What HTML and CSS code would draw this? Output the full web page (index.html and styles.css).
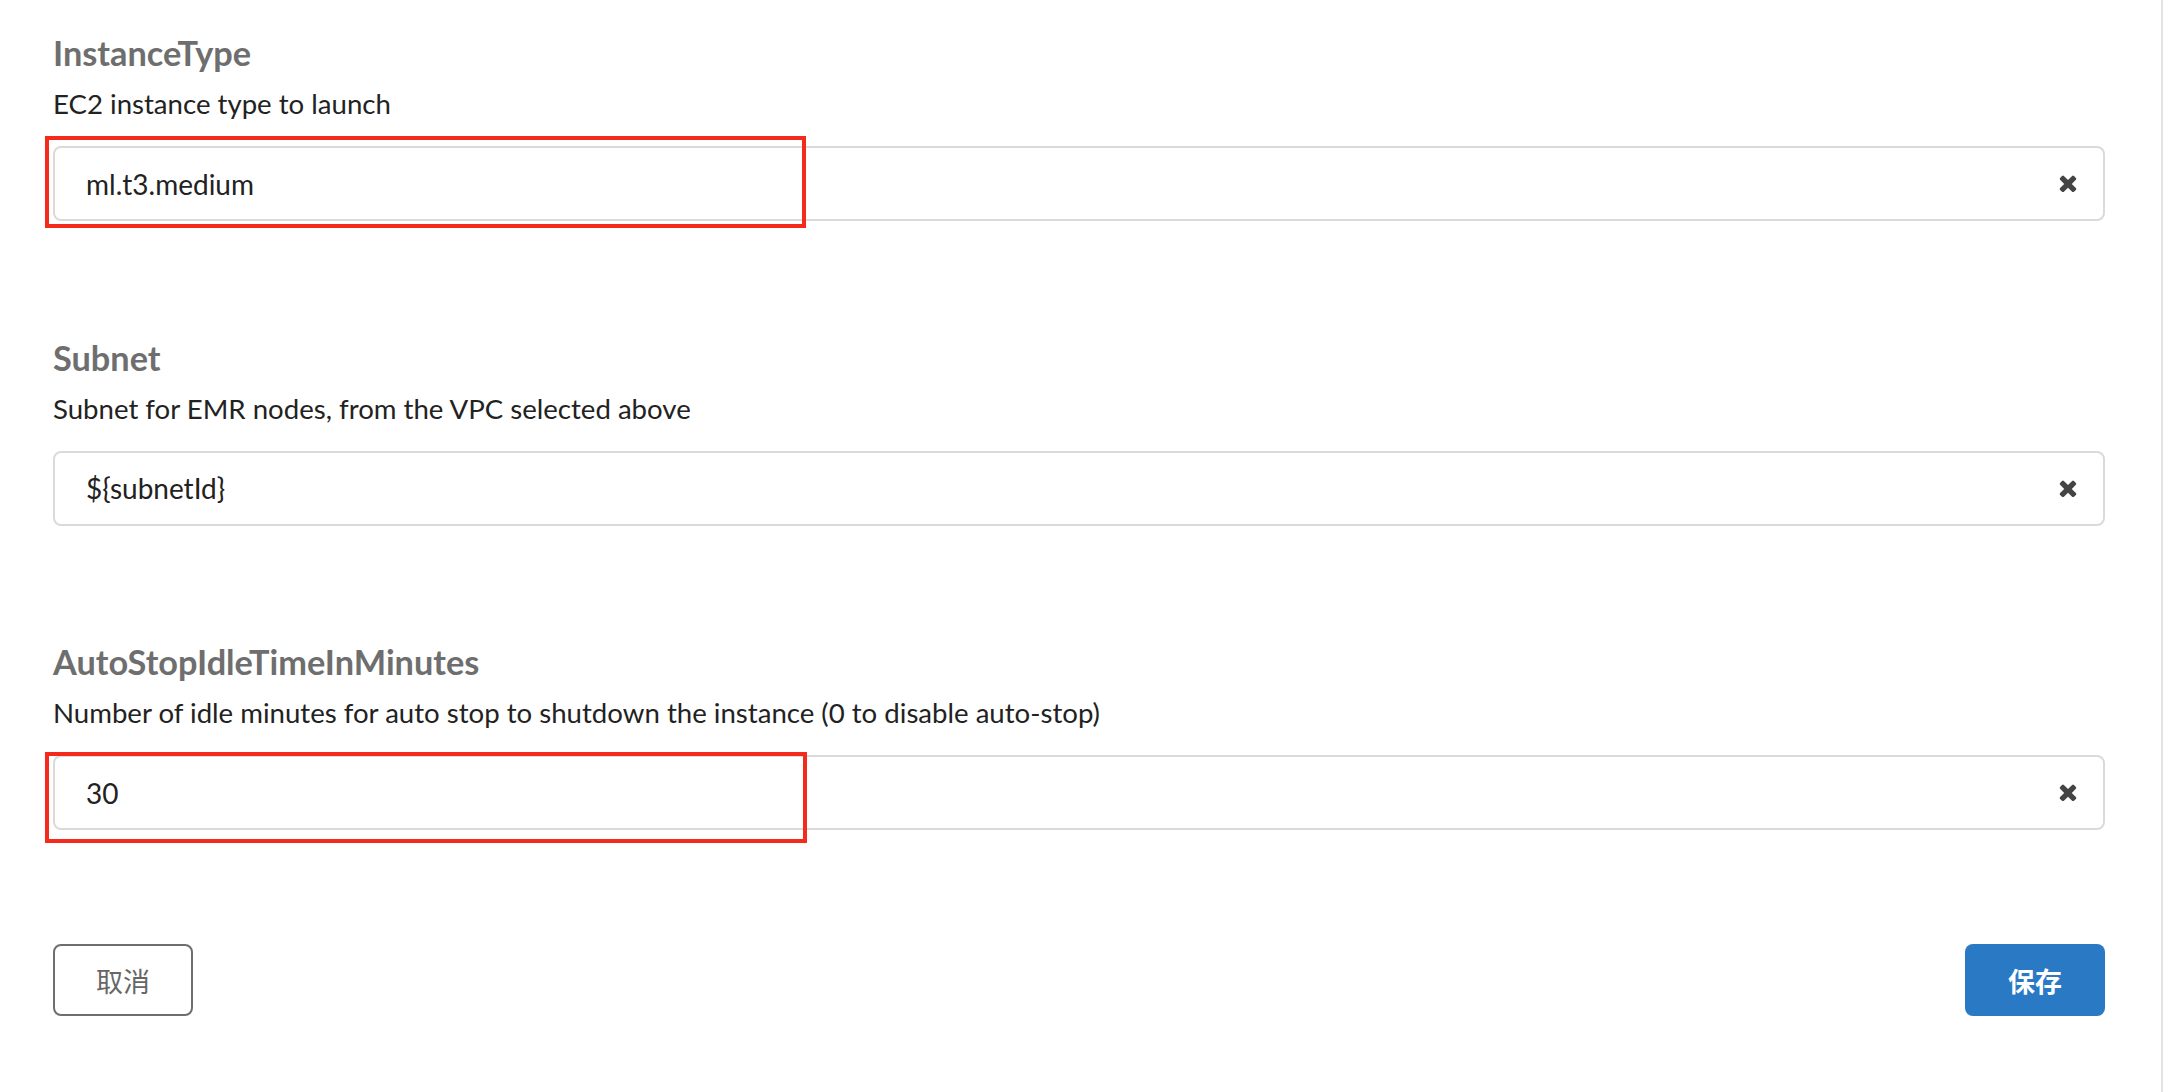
FILE: index.html
```html
<!DOCTYPE html>
<html lang="en">
<head>
<meta charset="utf-8">
<title>Parameters</title>
<link rel="stylesheet" href="styles.css">
</head>
<body>
<div class="panel">
  <form class="form">
    <section class="field">
      <h3 class="field-title">InstanceType</h3>
      <p class="field-desc">EC2 instance type to launch</p>
      <div class="input-wrap">
        <input class="input" type="text" value="ml.t3.medium">
        <button type="button" class="clear" aria-label="clear">
          <svg viewBox="100 250 1208 1290" width="18" height="18"><path fill="#444" d="M1298 1322q0 40-28 68l-136 136q-28 28-68 28t-68-28l-294-294-294 294q-28 28-68 28t-68-28l-136-136q-28-28-28-68t28-68l294-294-294-294q-28-28-28-68t28-68l136-136q28-28 68-28t68 28l294 294 294-294q28-28 68-28t68 28l136 136q28 28 28 68t-28 68l-294 294 294 294q28 28 28 68z"/></svg>
        </button>
        <span class="mark mark-1"></span>
      </div>
    </section>
    <section class="field">
      <h3 class="field-title">Subnet</h3>
      <p class="field-desc">Subnet for EMR nodes, from the VPC selected above</p>
      <div class="input-wrap">
        <input class="input" type="text" value="${subnetId}">
        <button type="button" class="clear" aria-label="clear">
          <svg viewBox="100 250 1208 1290" width="18" height="18"><path fill="#444" d="M1298 1322q0 40-28 68l-136 136q-28 28-68 28t-68-28l-294-294-294 294q-28 28-68 28t-68-28l-136-136q-28-28-28-68t28-68l294-294-294-294q-28-28-28-68t28-68l136-136q28-28 68-28t68 28l294 294 294-294q28-28 68-28t68 28l136 136q28 28 28 68t-28 68l-294 294 294 294q28 28 28 68z"/></svg>
        </button>
      </div>
    </section>
    <section class="field">
      <h3 class="field-title">AutoStopIdleTimeInMinutes</h3>
      <p class="field-desc">Number of idle minutes for auto stop to shutdown the instance (0 to disable auto-stop)</p>
      <div class="input-wrap">
        <input class="input" type="text" value="30">
        <button type="button" class="clear" aria-label="clear">
          <svg viewBox="100 250 1208 1290" width="18" height="18"><path fill="#444" d="M1298 1322q0 40-28 68l-136 136q-28 28-68 28t-68-28l-294-294-294 294q-28 28-68 28t-68-28l-136-136q-28-28-28-68t28-68l294-294-294-294q-28-28-28-68t28-68l136-136q28-28 68-28t68 28l294 294 294-294q28-28 68-28t68 28l136 136q28 28 28 68t-28 68l-294 294 294 294q28 28 28 68z"/></svg>
        </button>
        <span class="mark mark-3"></span>
      </div>
    </section>
    <div class="actions">
      <button type="button" class="btn btn-cancel">取消</button>
      <button type="button" class="btn btn-save">保存</button>
    </div>
  </form>
</div>
</body>
</html>
```
FILE: styles.css
```css
html, body {
  margin: 0;
  padding: 0;
  background: #fff;
}
body {
  font-family: Lato, "Noto Sans CJK SC", sans-serif;
  color: #222;
}
.panel {
  width: 2163px;
  min-height: 1092px;
  border-right: 2px solid #e3e3e3;
  box-sizing: border-box;
}
.form {
  padding: 35px 56px 0 53px;
}
.field {
  margin: 0 0 118.5px 0;
}
.field-title {
  margin: 0;
  font-size: 34.3px;
  line-height: 36px;
  font-weight: 700;
  color: #6e6e6e;
}
.field-desc {
  margin: 15px 0 0 0;
  font-size: 27.6px;
  line-height: 36px;
  color: #222;
}
.input-wrap {
  position: relative;
  margin-top: 24px;
}
.input {
  display: block;
  width: 100%;
  height: 75px;
  box-sizing: border-box;
  border: 2px solid #dadada;
  border-radius: 8px;
  padding: 0 80px 0 31px;
  font-family: Lato, sans-serif;
  font-size: 28px;
  color: #222;
  background: #fff;
  outline: none;
}
.clear {
  position: absolute;
  right: 28px;
  top: 28px;
  width: 18px;
  height: 18px;
  padding: 0;
  border: 0;
  background: none;
  display: flex;
}
.mark {
  position: absolute;
  box-sizing: border-box;
  border: 4px solid #f42a1c;
  pointer-events: none;
}
.mark-1 {
  left: -8px;
  top: -10px;
  width: 761px;
  height: 92px;
}
.mark-3 {
  left: -8px;
  top: -3px;
  width: 762px;
  height: 91px;
}
.actions {
  display: flex;
  justify-content: space-between;
  margin-top: -4.5px;
}
.btn {
  width: 140px;
  height: 72px;
  border-radius: 8px;
  font-family: "Noto Sans CJK SC", sans-serif;
  font-size: 27px;
  box-sizing: border-box;
}
.btn-cancel {
  background: #fff;
  border: 2px solid #6e6e6e;
  color: #666;
}
.btn-save {
  background: #2979c5;
  border: 0;
  color: #fff;
  font-weight: 700;
}
```
